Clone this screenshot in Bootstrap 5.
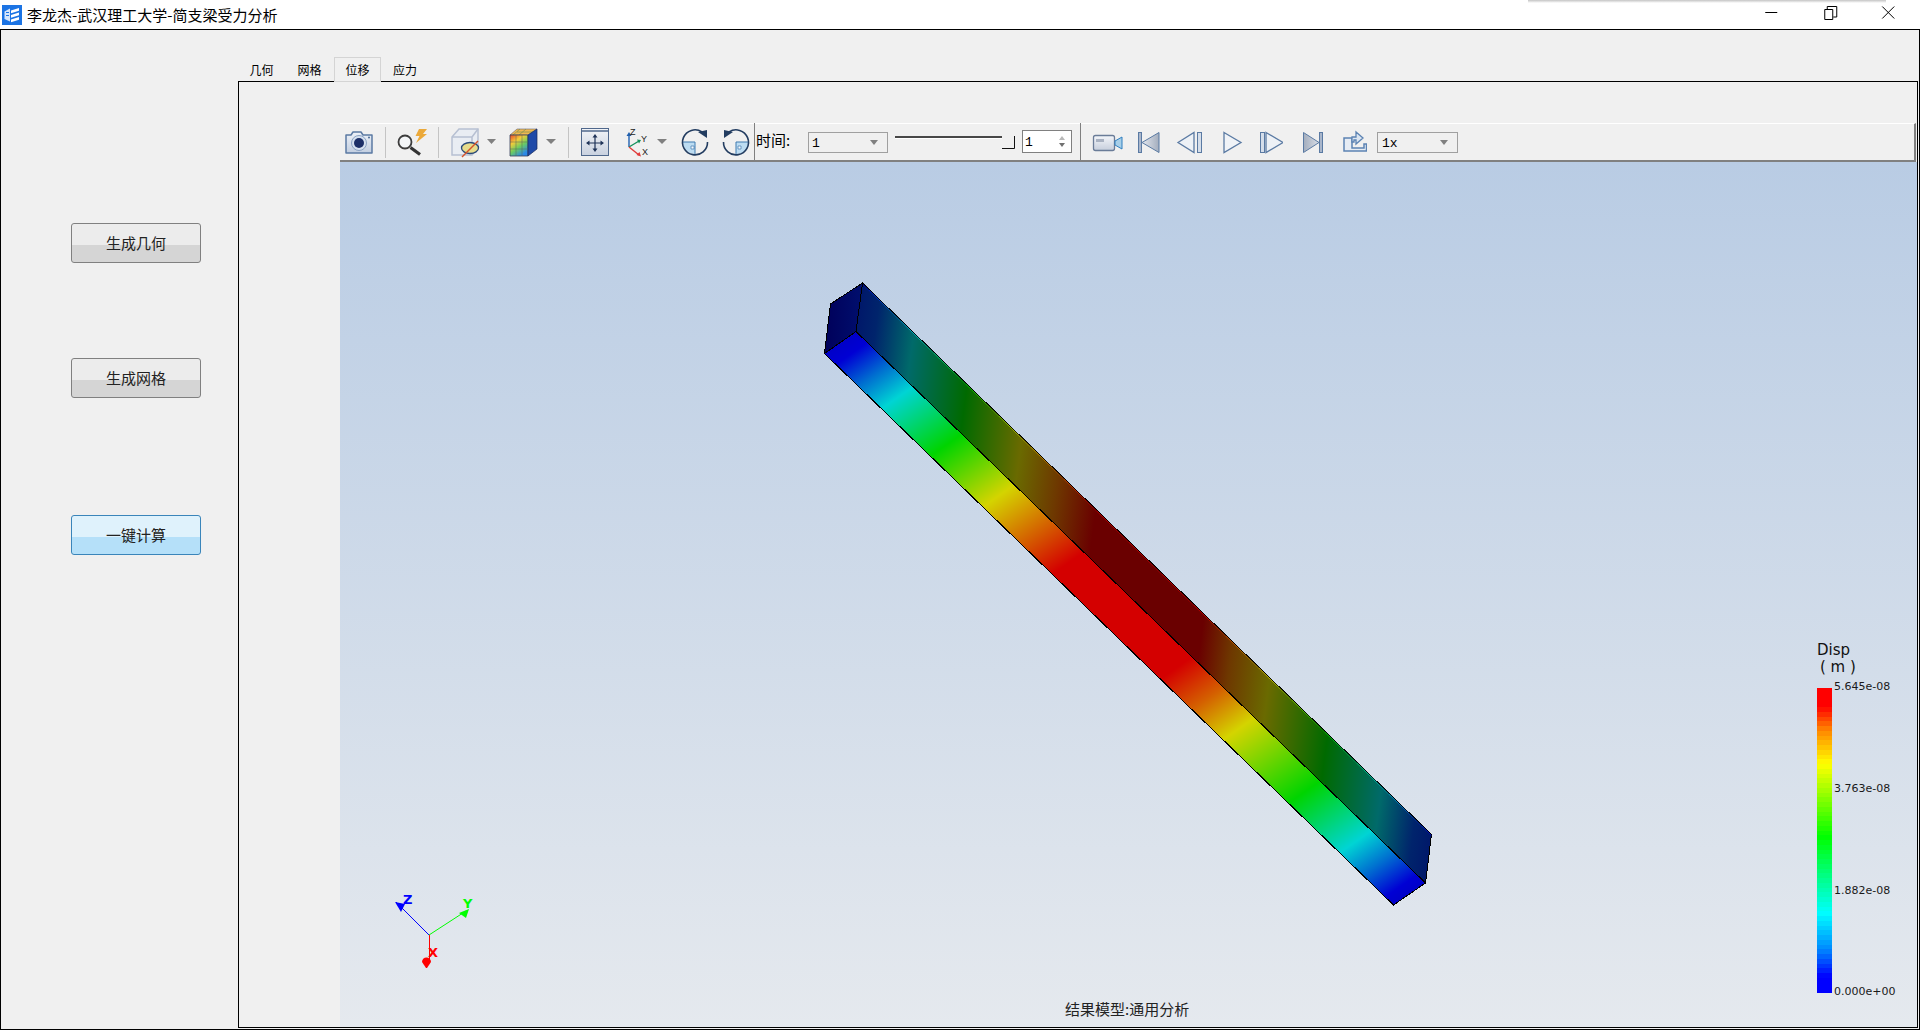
<!DOCTYPE html>
<html lang="zh">
<head>
<meta charset="utf-8">
<title>简支梁受力分析</title>
<link href="https://cdn.jsdelivr.net/npm/bootstrap@5.3.0/dist/css/bootstrap.min.css" rel="stylesheet">
<style>
html,body{height:100%;margin:0;overflow:hidden;background:#f0f0f0;color:#000;font-family:"Noto Sans CJK SC","Liberation Sans",sans-serif}
.app-win{width:1920px;height:1030px;position:relative}
.title-bar{height:29px;background:#fff;font-size:15px;line-height:29px;flex:none;padding-right:3px}
.title-icon{width:20px;height:20px;margin-left:2px;margin-right:5px;display:block}
.title-gap{flex:1}
.win-btn{width:58.500px;height:24px;display:block;margin-top:-5px}
.top-shadow{position:absolute;left:1528px;top:0;width:358px;height:3px;background:linear-gradient(#c4c4c4,#fff)}
.main-frame{border:1px solid #000;flex:1;min-height:0;background:#f0f0f0}
.side-panel{width:237px;flex:none;padding-left:70px}
.act-btn{width:130px;height:40px;padding:0;font-size:15px;line-height:36px;color:#222;border:1px solid #808080;border-radius:3px;background:linear-gradient(#ececec 0 21px,#d5d5d5 21px);display:block}
.act-btn:hover,.act-btn:active{color:#222;border-color:#808080}
.act-blue,.act-blue:hover{border-color:#3a85ba;background:linear-gradient(#dff2fc 0 21px,#b5e0f9 21px)}
.btn-one{margin-top:193px}.btn-two{margin-top:95px}.btn-three{margin-top:117px}
.work-area{flex:1;min-width:0;margin:0 1px 1px 0}
.tab-strip{margin-top:27px;height:24px;flex:none;flex-wrap:nowrap}
.tab-item{width:48px;height:25px;font-size:12px;line-height:24px;text-align:center;color:#000;border:1px solid transparent;border-bottom:0;position:relative;z-index:1}
.tab-first{width:47px}
.tab-second{width:49px}
.tab-on{width:47px;border-color:#d4d4d4;border-bottom:1px solid #d4d4d4;background:#f0f0f0}
.tab-pane-box{flex:1;min-height:0;border:1px solid #000;padding:41px 0 0 101px}
.tool-row{height:39px;flex:none;background:#f0f0f0;border-top:1px solid #fff;border-bottom:2px solid #808080;margin-right:1px;border-right:2px solid #808080}
.tool-row svg{display:block;flex:none;margin-top:-1px}
.tool-sep{width:1px;height:31px;background:#c4c4c4;margin-top:3px;flex:none}
.tool-vline{width:1px;height:38px;background:#808080;flex:none;margin-top:-1px}
.time-label{width:53px;padding-left:1px;font-size:15px;line-height:32px;flex:none}
.combo-box{width:80px;height:21px;margin-top:8px;border:1px solid #a0a0a0;background:#f0f0f0;font:13px/21px "Liberation Mono",monospace;padding-left:3px;position:relative;flex:none}
.combo-arrow{position:absolute;right:9px;top:7px;border-style:solid;border-width:5px 4px 0;border-color:#808080 transparent transparent}
.tool-row .slider-wrap{margin-left:7px}
.spin-box{width:50px;height:23px;margin:6px 0 0 7px;border:1px solid #808080;background:#fff;font:13px/23px "Liberation Mono",monospace;padding-left:2px;position:relative;flex:none}
.spin-up,.spin-down{position:absolute;right:6px;border-style:solid;border-color:transparent}
.spin-up{top:5px;border-width:0 3px 4px;border-bottom-color:#b8b8b8}
.spin-down{top:12px;border-width:4px 3px 0;border-top-color:#707070}
.tool-vline2{margin-left:8px}
.combo-speed{width:81px;margin-left:10px;padding-left:4px}
.view-port{flex:1;min-height:0;position:relative;background:linear-gradient(#b9cce4,#e5e9ee);overflow:hidden}
.scene-svg{position:absolute;left:0;top:0;display:block}
.leg-small{font:11px "DejaVu Sans",sans-serif;fill:#1a1a1a}
.leg-big{font:15px "DejaVu Sans",sans-serif;fill:#111}
.model-note{font:15px "Noto Sans CJK SC",sans-serif;fill:#222}
.axis-txt{font:bold 13px "DejaVu Sans",sans-serif}
.mini-txt{font:9px "Liberation Sans",sans-serif;fill:#222}
</style>
</head>
<body>
<div class="app-win d-flex flex-column">
  <div class="title-bar d-flex align-items-center">
    <svg class="title-icon" viewBox="0 0 20 20"><rect width="20" height="20" fill="#1c74e4"/><path d="M2.500 6.500L8 3.500v13l-5.500-2.500z" fill="#d6e6fb"/><path d="M9 5.500l8-2.500v2.800L9 8.300zM9 10l8-2.500v2.800L9 12.800zM9 14.500l8-2.500v2.800L9 17.300z" fill="#fff"/><path d="M4 7.500h3M4 10.500h3" stroke="#1c74e4"/></svg>
    <span>李龙杰-武汉理工大学-简支梁受力分析</span>
    <span class="title-gap"></span>
    <svg class="win-btn" viewBox="-5 0 58 24"><path d="M18 12.500h12" stroke="#000"/></svg>
    <svg class="win-btn" viewBox="-5 0 58 24"><path d="M19.500 9.500h8v10h-8zM22 9V6.500h9.500V17H28" fill="none" stroke="#000"/></svg>
    <svg class="win-btn" viewBox="-5 0 58 24"><path d="M18 6.500l12 12M30 6.500l-12 12" stroke="#000"/></svg>
  </div>
  <div class="top-shadow"></div>
  <div class="main-frame d-flex">
    <div class="side-panel">
      <button type="button" class="btn act-btn btn-one">生成几何</button>
      <button type="button" class="btn act-btn btn-two">生成网格</button>
      <button type="button" class="btn act-btn act-blue btn-three">一键计算</button>
    </div>
    <div class="work-area d-flex flex-column">
      <div class="nav tab-strip">
        <div class="tab-item tab-first">几何</div>
        <div class="tab-item tab-second">网格</div>
        <div class="tab-item tab-on">位移</div>
        <div class="tab-item">应力</div>
      </div>
      <div class="tab-pane-box d-flex flex-column">
        <div class="tool-row d-flex">
          <svg width="45" height="38" viewBox="340 123 45 38">
            <defs><linearGradient id="gBody" x1="0" y1="0" x2="0" y2="1"><stop offset="0" stop-color="#eef2f8"/><stop offset="1" stop-color="#c2cee0"/></linearGradient></defs>
            <path d="M346 135h5l2-3h8l2 3h9v18h-26z" fill="url(#gBody)" stroke="#5b7aa3" stroke-width="1.500" stroke-linejoin="round"/>
            <circle cx="359" cy="143" r="7.500" fill="#d5e0ef" stroke="#8ba3c4"/><circle cx="359" cy="143" r="5" fill="#1c2f68"/><circle cx="369" cy="137.500" r="1" fill="#4a6a96"/>
          </svg>
          <div class="tool-sep"></div>
          <svg width="52" height="38" viewBox="386 123 52 38">
            <circle cx="405" cy="142" r="6.500" fill="#f4f6f8" stroke="#3c3c3c" stroke-width="1.800"/><path d="M410.500 147.500l9.500 7" stroke="#333" stroke-width="3.200"/>
            <path d="M419 129h8l-4 5h4l-11 9 3.500-7h-4z" fill="#eba93a"/>
          </svg>
          <div class="tool-sep"></div>
          <svg width="61" height="38" viewBox="439 123 61 38">
            <path d="M452 137l7-8h19v18l-6 8h-20z" fill="#e9edf3" stroke="#b7c0d2" stroke-width="1.500"/><path d="M452 137h20v18M472 137l6-8" fill="none" stroke="#b7c0d2" stroke-width="1.500"/>
            <ellipse cx="470" cy="148" rx="8.500" ry="5.500" fill="#e6dc8c" stroke="#2a4a7a" stroke-width="1.300"/><path d="M462 157l16-16" stroke="#d5522a" stroke-width="1.400"/>
            <path d="M487 139h9l-4.500 5z" fill="#808080"/>
          </svg>
          <svg width="68" height="38" viewBox="500 123 68 38">
            <defs><linearGradient id="gFace" x1="0" y1="0" x2=".6" y2="1"><stop offset="0" stop-color="#e8482a"/><stop offset=".35" stop-color="#f4cc3a"/><stop offset=".65" stop-color="#6ccc60"/><stop offset="1" stop-color="#2a88e8"/></linearGradient></defs>
            <path d="M510 135l7-6h20l-9 6z" fill="#f0b850" stroke="#667" stroke-width=".6"/>
            <path d="M517 132h18M513 135l7-6M519 135l7-6" stroke="#6a8a50" stroke-width=".6"/>
            <path d="M510 135h18v21h-18z" fill="url(#gFace)" stroke="#35405a" stroke-width=".8"/>
            <path d="M528 135l9-6v20l-9 7z" fill="#1f4aa8" stroke="#1a2a5a" stroke-width=".7"/>
            <path d="M516 135v21M522 135v21M510 142h18M510 149h18" stroke="#5a6a58" stroke-width=".5"/>
            <path d="M546 139h10l-5 5z" fill="#808080"/>
          </svg>
          <div class="tool-sep"></div>
          <svg width="48" height="38" viewBox="569 123 48 38">
            <defs><linearGradient id="gFit" x1="0" y1="0" x2="0" y2="1"><stop offset="0" stop-color="#f2f4f8"/><stop offset="1" stop-color="#c9d1df"/></linearGradient></defs>
            <rect x="581.500" y="128.500" width="27" height="27" fill="url(#gFit)" stroke="#50688c"/><path d="M582 131h26" stroke="#50688c" stroke-width="1.500"/>
            <path d="M595 136v13M588 143h14" stroke="#1f3358" stroke-width="1.200"/><path d="M595 134l-2.500 3.500h5zM595 152l-2.500-3.500h5zM586 143l3.500-2.500v5zM604 143l-3.500-2.500v5z" fill="#1f3358"/>
          </svg>
          <svg width="58" height="38" viewBox="617 123 58 38">
            <path d="M629 147v-13" stroke="#2060b0" stroke-width="1.400"/><path d="M629 132l-2.500 4h5z" fill="#2060b0"/>
            <path d="M629 147l10-6" stroke="#12905a" stroke-width="1.400"/><path d="M641 140l-4-.5 2 4z" fill="#12905a"/>
            <path d="M629 147l10 8" stroke="#e03a3a" stroke-width="1.400"/><path d="M641 156.500l-1.500-4.500-3 3z" fill="#e03a3a"/>
            <text class="mini-txt" x="630" y="135">Z</text><text class="mini-txt" x="641" y="142">Y</text><text class="mini-txt" x="642" y="155">X</text>
            <path d="M657 139h10l-5 5z" fill="#808080"/>
          </svg>
          <svg width="41" height="38" viewBox="675 123 41 38">
            <path d="M683 142h12v12a12 12 0 0 1-12-12z" fill="#bcdcf2"/><path d="M683 142h12v12" fill="none" stroke="#3f7ab0"/>
            <path d="M691 146h3v3h-3z" fill="#f4f8fc" stroke="#3f7ab0" stroke-width=".7"/>
            <path d="M702 132a12.500 12.500 0 1 0 5.500 10" fill="none" stroke="#223c60" stroke-width="1.600"/><path d="M707 130v8l-9-6z" fill="#223c60"/>
          </svg>
          <svg width="38" height="38" viewBox="716 123 38 38">
            <path d="M736 142h13a12 12 0 0 1-13 12z" fill="#bcdcf2"/><path d="M749 142h-13v12" fill="none" stroke="#3f7ab0"/>
            <path d="M738 146h3v3h-3z" fill="#f4f8fc" stroke="#3f7ab0" stroke-width=".7"/>
            <path d="M729 132a12.500 12.500 0 1 1-5.500 10" fill="none" stroke="#223c60" stroke-width="1.600"/><path d="M724 130v8l9-6z" fill="#223c60"/>
          </svg>
          <div class="tool-vline"></div>
          <div class="time-label">时间:</div>
          <div class="combo-box">1<span class="combo-arrow"></span></div>
          <svg class="slider-wrap" width="120" height="38" viewBox="895 123 120 38">
            <path d="M895 137h107" stroke="#111" stroke-width="1.600"/><path d="M895 138.500h107" stroke="#fff"/>
            <path d="M1002 136h12v12h-12z" fill="#f0f0f0"/><path d="M1002 148.500h12.500V136" fill="none" stroke="#111"/>
          </svg>
          <div class="spin-box">1<span class="spin-up"></span><span class="spin-down"></span></div>
          <div class="tool-vline tool-vline2"></div>
          <svg width="42" height="38" viewBox="1081 123 42 38">
            <defs><linearGradient id="gCam" x1="0" y1="0" x2="0" y2="1"><stop offset="0" stop-color="#f4f6fa"/><stop offset="1" stop-color="#c6cedc"/></linearGradient></defs>
            <rect x="1093.500" y="135.500" width="21" height="15" rx="2" fill="url(#gCam)" stroke="#6a7c98" stroke-width="1.300"/><rect x="1096" y="139" width="8" height="3" fill="#a9b2c2"/>
            <path d="M1115 141l7-4v12l-7-4z" fill="#a8cfe8" stroke="#2f7fc0"/>
          </svg>
          <svg width="79" height="38" viewBox="1123 123 79 38">
            <defs><linearGradient id="gTri" x1="0" y1="0" x2="1" y2="0"><stop offset="0" stop-color="#e4e8ef"/><stop offset="1" stop-color="#a3adbd"/></linearGradient><linearGradient id="gTriR" x1="1" y1="0" x2="0" y2="0"><stop offset="0" stop-color="#d8dde6"/><stop offset="1" stop-color="#a3adbd"/></linearGradient></defs>
            <rect x="1138.500" y="132.500" width="3" height="20" fill="#a9b6cb" stroke="#5a7aa3"/><path d="M1142 142.500l17-10v20z" fill="url(#gTri)" stroke="#5a7aa3"/>
            <path d="M1178 142.500l16-10v20z" fill="#edf1f6" stroke="#5a7aa3" stroke-width="1.300"/><rect x="1197.500" y="132.500" width="4" height="20" fill="#d5deea" stroke="#5a7aa3"/>
          </svg>
          <svg width="45" height="38" viewBox="1202 123 45 38">
            <path d="M1224 132.500l17 10-17 10z" fill="#f0f3f7" stroke="#5a7aa3" stroke-width="1.300"/>
          </svg>
          <svg width="36" height="38" viewBox="1247 123 36 38">
            <rect x="1260.500" y="132.500" width="4" height="20" fill="#d5deea" stroke="#5a7aa3"/><path d="M1266 132.500l17 10-17 10z" fill="#edf1f6" stroke="#5a7aa3" stroke-width="1.300"/>
          </svg>
          <svg width="41" height="38" viewBox="1283 123 41 38">
            <path d="M1303.500 132.500l15.500 10-15.500 10z" fill="url(#gTriR)" stroke="#5a7aa3"/><rect x="1319.500" y="132.500" width="3" height="20" fill="#a9b6cb" stroke="#5a7aa3"/>
          </svg>
          <svg width="43" height="38" viewBox="1324 123 43 38">
            <path d="M1344 138h8v10h12v-4h2.500v7h-22.500z" fill="#e6ecf4" stroke="#5c83b3" stroke-width="1.500"/>
            <path d="M1352 142v-5h4v-5l7 6-7 6v-4h-2v2z" fill="#dbe5f1" stroke="#5c83b3" stroke-width="1.300"/>
          </svg>
          <div class="combo-box combo-speed">1x<span class="combo-arrow"></span></div>
        </div>
        <div class="view-port">
          <svg class="scene-svg" width="1577" height="865" viewBox="340 162 1577 865">
            <defs>
              <linearGradient id="beamLit" gradientUnits="userSpaceOnUse" x1="856" y1="331.500" x2="1301.700" y2="969.600">
                <stop offset="0" stop-color="#0000c8"/><stop offset=".02" stop-color="#0000d4"/><stop offset=".06" stop-color="#0070d0"/><stop offset=".1" stop-color="#00d4d4"/><stop offset=".186" stop-color="#00d400"/><stop offset=".278" stop-color="#d4d400"/><stop offset=".345" stop-color="#d46000"/><stop offset=".4" stop-color="#d40000"/><stop offset=".59" stop-color="#d40000"/><stop offset=".645" stop-color="#d46000"/><stop offset=".7" stop-color="#d4d400"/><stop offset=".815" stop-color="#00d400"/><stop offset=".905" stop-color="#00d4d4"/><stop offset=".945" stop-color="#0070d0"/><stop offset=".985" stop-color="#0000d4"/><stop offset="1" stop-color="#0000c8"/>
              </linearGradient>
              <linearGradient id="beamDark" gradientUnits="userSpaceOnUse" x1="856" y1="331.500" x2="1488.100" y2="416.200">
                <stop offset="0" stop-color="#00186a"/><stop offset=".03" stop-color="#00246c"/><stop offset=".09" stop-color="#006a6a"/><stop offset=".184" stop-color="#006a00"/><stop offset=".28" stop-color="#6a6a00"/><stop offset=".345" stop-color="#6e3800"/><stop offset=".41" stop-color="#6a0000"/><stop offset=".6" stop-color="#6a0000"/><stop offset=".65" stop-color="#6e3800"/><stop offset=".715" stop-color="#6a6a00"/><stop offset=".817" stop-color="#006a00"/><stop offset=".912" stop-color="#006a6a"/><stop offset=".97" stop-color="#00246c"/><stop offset="1" stop-color="#00186a"/>
              </linearGradient>
              <linearGradient id="beamFringe" gradientUnits="userSpaceOnUse" x1="862.500" y1="283" x2="1431.500" y2="834.500">
                <stop offset="0" stop-color="#0000d4"/><stop offset=".1" stop-color="#00d4d4"/><stop offset=".186" stop-color="#00d400"/><stop offset=".278" stop-color="#d4d400"/><stop offset=".4" stop-color="#d40000"/><stop offset=".6" stop-color="#d40000"/><stop offset=".72" stop-color="#d4d400"/><stop offset=".815" stop-color="#00d400"/><stop offset=".91" stop-color="#00d4d4"/><stop offset="1" stop-color="#0000d4"/>
              </linearGradient>
              <linearGradient id="endCap" x1="0" y1="0" x2="1" y2="0"><stop offset="0" stop-color="#00005a"/><stop offset="1" stop-color="#000f6e"/></linearGradient>
              <linearGradient id="legendBar" x1="0" y1="0" x2="0" y2="1">
                <stop offset="0" stop-color="#f00"/><stop offset=".06" stop-color="#f00"/><stop offset=".14" stop-color="#f80"/><stop offset=".25" stop-color="#ff0"/><stop offset=".49" stop-color="#0f0"/><stop offset=".74" stop-color="#0ff"/><stop offset=".86" stop-color="#08f"/><stop offset=".95" stop-color="#00f"/><stop offset="1" stop-color="#00f"/>
              </linearGradient>
            </defs>
            <g shape-rendering="crispEdges" stroke="#000" stroke-width="1" stroke-linejoin="round">
              <path d="M862.500 283L856 331.500 1425.500 883 1431.500 834.500z" fill="url(#beamDark)"/>
              <path d="M824.500 353.500L856 331.500 1425.500 883 1393.500 905z" fill="url(#beamLit)"/>
              <path d="M862.500 283L830.500 304 824.500 353.500 856 331.500z" fill="url(#endCap)"/>
            </g>
            <path d="M863 284.500L1431.500 835.500" stroke="url(#beamFringe)" stroke-width="1" fill="none" stroke-opacity=".7"/>
            <path d="M429 935L396 902" stroke="#00f"/><path d="M395 902l10 2-4 8z" fill="#00f"/>
            <path d="M429 935L466 911" stroke="#0f0"/><path d="M469 909l-3 9-7-5z" fill="#0f0"/>
            <path d="M429.500 935V962" stroke="#f00"/><path d="M422 962a4.500 4.500 0 0 1 9 0l-4 6h-1z" fill="#f00"/>
            <text class="axis-txt" x="403" y="904" fill="#0000ff">Z</text>
            <text class="axis-txt" x="463" y="908" fill="#00ff00">Y</text>
            <text class="axis-txt" x="428" y="957" fill="#ff0000">X</text>
            <text class="model-note" x="1065" y="1015">结果模型:通用分析</text>
            <text class="leg-big" x="1817" y="655">Disp</text>
            <text class="leg-big" x="1820" y="672">( m )</text>
            <rect x="1817" y="688" width="15" height="304" fill="url(#legendBar)"/>
            <g id="legendBands" shape-rendering="crispEdges"></g>
            <text class="leg-small" x="1834" y="690">5.645e-08</text>
            <text class="leg-small" x="1834" y="792">3.763e-08</text>
            <text class="leg-small" x="1834" y="894">1.882e-08</text>
            <text class="leg-small" x="1834" y="995">0.000e+00</text>
          </svg>
        </div>
      </div>
    </div>
  </div>
</div>
<script src="https://cdn.jsdelivr.net/npm/bootstrap@5.3.0/dist/js/bootstrap.bundle.min.js"></script>
<script>
(function(){
  var stops=[[0,255,0,0],[.06,255,0,0],[.14,255,136,0],[.25,255,255,0],[.49,0,255,0],[.74,0,255,255],[.86,0,136,255],[.95,0,0,255],[1,0,0,255]];
  var g=document.getElementById('legendBands'),n=64,h=304/n,ns='http://www.w3.org/2000/svg';
  for(var i=0;i<n;i++){
    var t=(i+.5)/n,k=0;
    while(k<stops.length-2&&t>stops[k+1][0])k++;
    var a=stops[k],b=stops[k+1],f=(t-a[0])/(b[0]-a[0]);
    var r=document.createElementNS(ns,'rect');
    r.setAttribute('x',1817);r.setAttribute('y',688+i*h);r.setAttribute('width',15);r.setAttribute('height',h+.5);
    r.setAttribute('fill','rgb('+[1,2,3].map(function(c){return Math.round(a[c]+(b[c]-a[c])*f)}).join(',')+')');
    g.appendChild(r);
  }
})();
</script>
</body>
</html>
